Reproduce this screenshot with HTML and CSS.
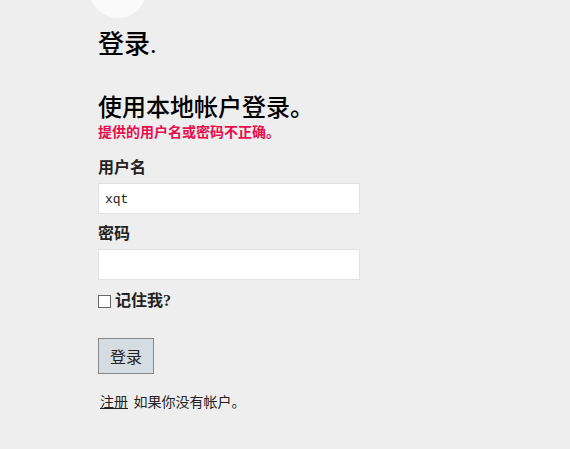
FILE: index.html
```html
<!DOCTYPE html>
<html lang="zh-CN">
<head>
    <meta charset="UTF-8">
    <title>登录</title>
    <link rel="stylesheet" href="styles.css">
</head>
<body>
    <div class="logo-wrap"><div class="logo"></div></div>
    <div class="content">
        <h2 class="title">登录.</h2>
        <section class="login-form">
            <h3>使用本地帐户登录。</h3>
            <div class="error">提供的用户名或密码不正确。</div>
            <label class="field-label first" for="user">用户名</label>
            <input class="text-box" type="text" id="user" value="xqt">
            <label class="field-label" for="pass">密码</label>
            <input class="text-box" type="password" id="pass">
            <label class="remember"><span class="box"></span>记住我?</label>
            <button class="submit">登录</button>
            <p class="register"><a href="#">注册</a> 如果你没有帐户。</p>
        </section>
    </div>
</body>
</html>
```

FILE: styles.css
```css
body {
    background-color: #eeeeee;
    margin: 0;
    font-family: "Liberation Serif", "Noto Sans CJK SC", serif;
    color: #111;
}

.logo-wrap {
    height: 18px;
    overflow: hidden;
    padding-left: 89px;
}

.logo {
    width: 58px;
    height: 58px;
    margin-top: -40px;
    border-radius: 50%;
    background: #fafafa;
}

.content {
    padding-left: 98px;
}

.title {
    font-size: 26px;
    font-weight: 500;
    margin: 11px 0 0;
    line-height: 32px;
    color: #000;
}

.login-form h3 {
    font-size: 24px;
    font-weight: 500;
    margin: 33px 0 0;
    line-height: 28px;
    color: #000;
}

.error {
    color: #e80c4d;
    font-weight: bold;
    font-size: 14px;
    line-height: 18px;
    margin-top: 2px;
}

.field-label {
    display: block;
    font-weight: bold;
    font-size: 16px;
    margin-top: 9px;
    line-height: 22px;
    color: #222;
}

.field-label.first {
    margin-top: 15px;
}

.text-box {
    display: block;
    box-sizing: border-box;
    width: 262px;
    height: 31px;
    margin-top: 4px;
    border: 1px solid #e2e2e2;
    background: #fff;
    padding: 2px 6px 0;
    font-family: "Liberation Mono", "DejaVu Sans Mono", monospace;
    font-size: 13px;
    color: #222;
    outline: none;
}

.remember {
    display: flex;
    align-items: center;
    margin-top: 11px;
    font-weight: bold;
    font-size: 16px;
    line-height: 20px;
    color: #222;
}

.box {
    width: 11px;
    height: 11px;
    border: 1px solid #666;
    background: #fff;
    margin-right: 4px;
}

.submit {
    display: block;
    margin-top: 27px;
    width: 56px;
    height: 36px;
    background: #d6dde2;
    border: 1px solid #888;
    font-family: "Noto Sans CJK SC", sans-serif;
    font-size: 16px;
    color: #222;
    padding: 0;
}

.register {
    margin: 19px 0 0 2px;
    font-size: 14px;
    line-height: 20px;
    color: #222;
}

.register a {
    color: #222;
    margin-right: 2px;
}
```
